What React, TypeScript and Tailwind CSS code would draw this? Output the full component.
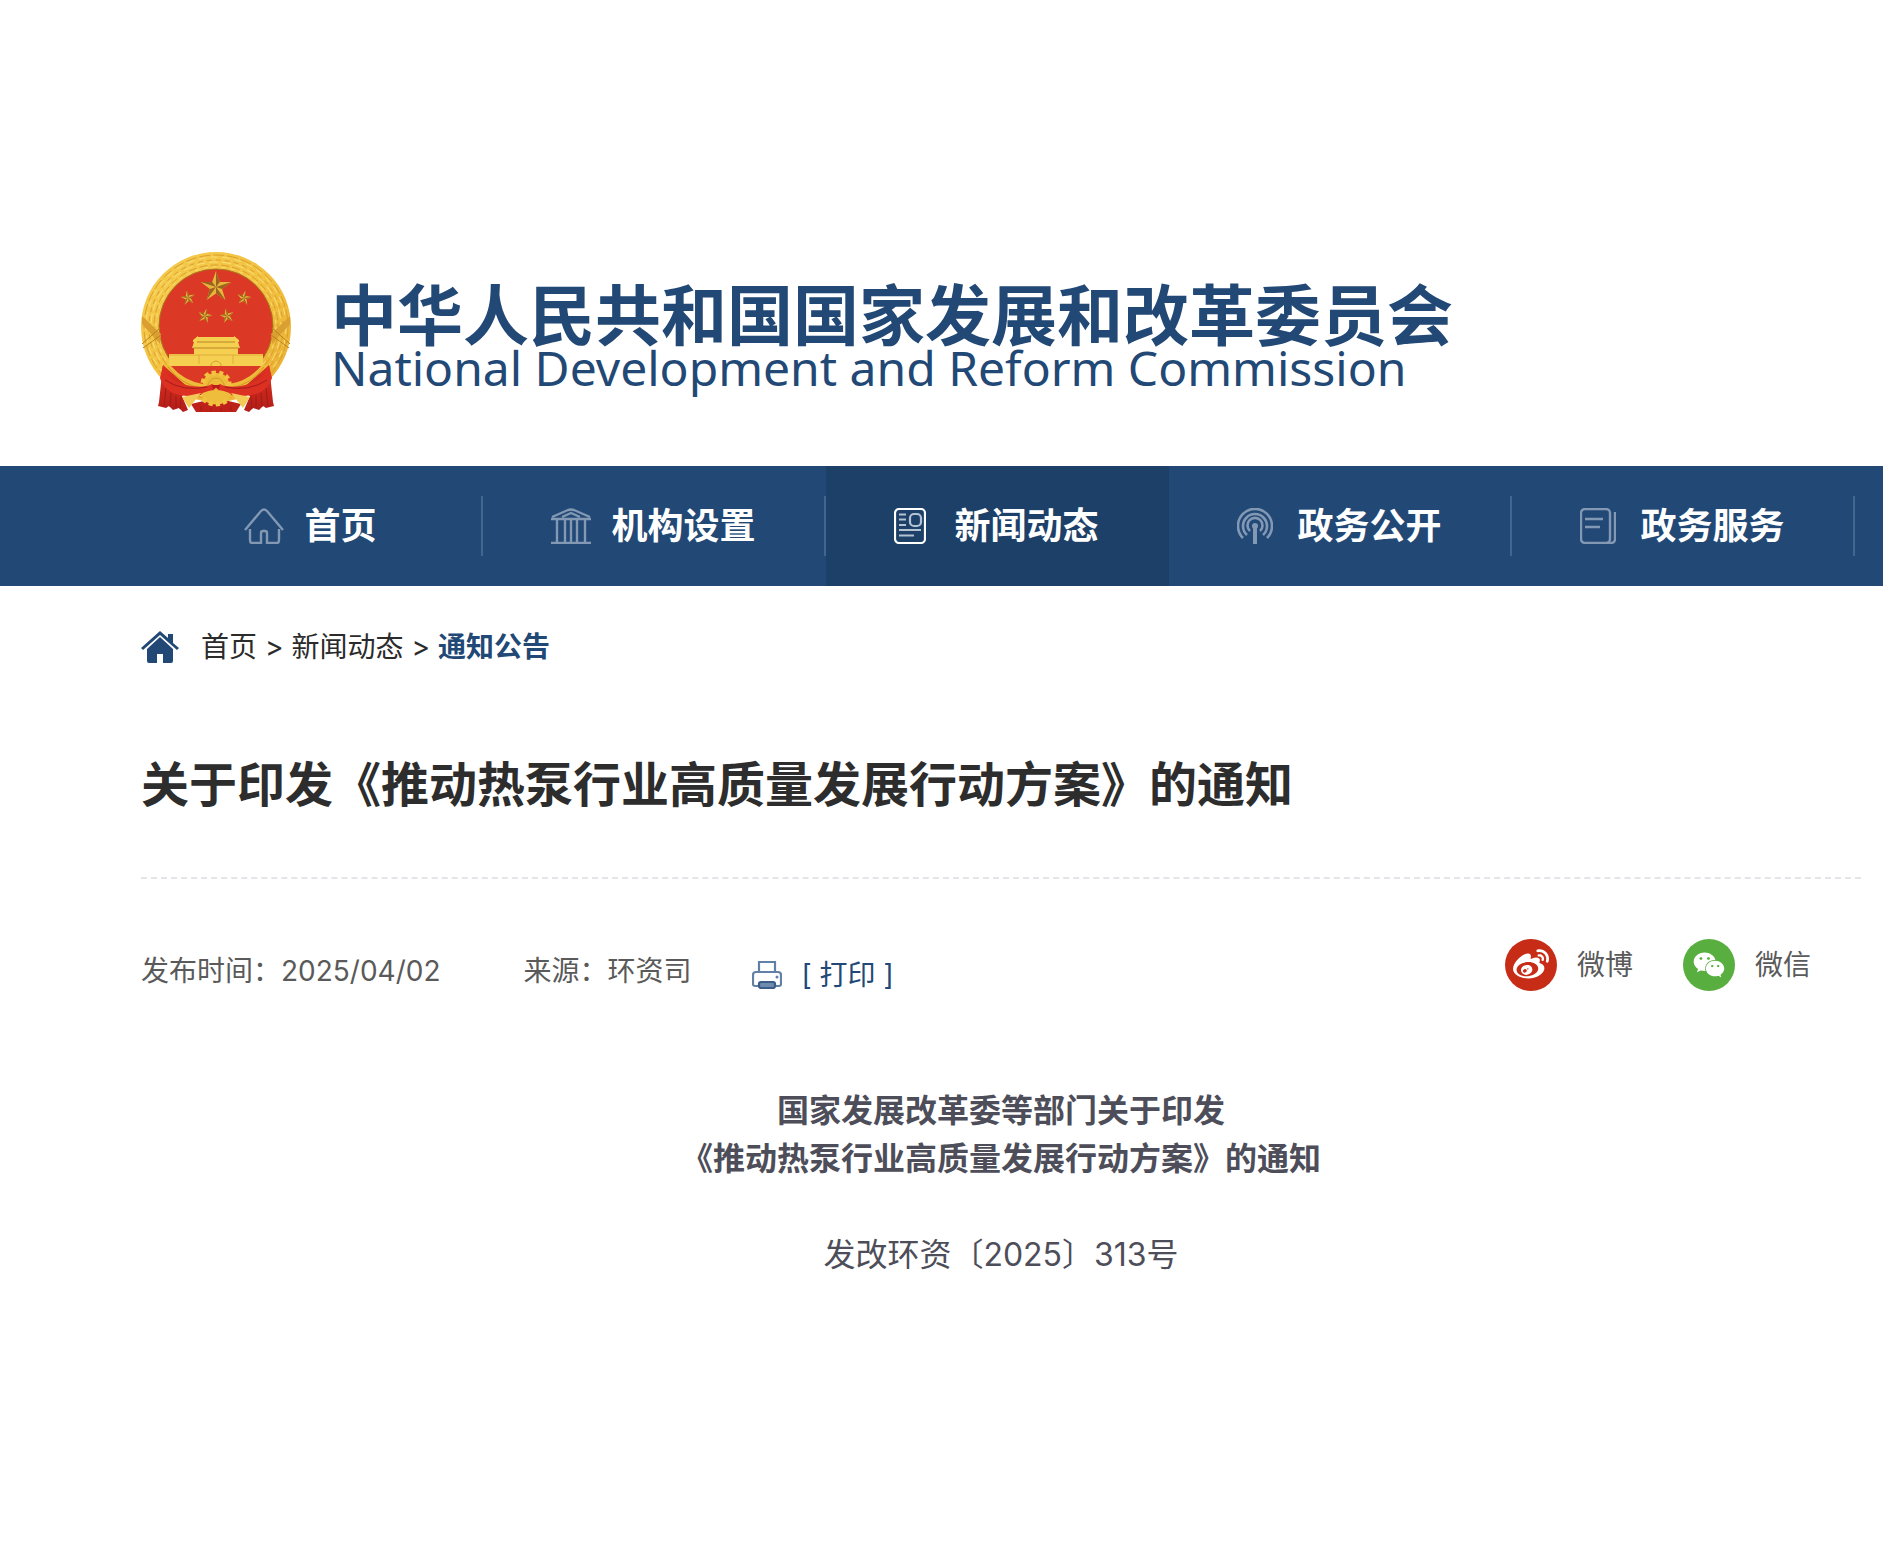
import type { ReactNode } from "react";
import { FaWeibo, FaWeixin } from "react-icons/fa";

function HomeIcon() {
    return (
        <svg className="w-10 h-9" viewBox="0 0 40 36" fill="none" stroke="currentColor" strokeWidth="2.4" aria-hidden="true">
            <path d="M1 22 17 3Q20 0 23 3L39 22" />
            <path d="M6 21V32Q6 35 8 35H17V25Q17 23 19 23H21Q23 23 23 25V35H33Q35 35 35 32V21" />
        </svg>
    );
}

function BankIcon() {
    return (
        <svg className="w-10 h-9" viewBox="0 0 40 36" fill="none" stroke="currentColor" strokeWidth="2.4" aria-hidden="true">
            <path d="M1 9 17 2Q20 1 23 2L39 9M0 11H40M0 35H40M11 9 20 5 29 9" />
            <path d="M6 12V34M14 12V34M20 12V34M26 12V34M34 12V34" />
        </svg>
    );
}

function NewsIcon() {
    return (
        <svg className="w-8 h-9" viewBox="0 0 32 36" fill="none" stroke="currentColor" strokeWidth="2.2" aria-hidden="true">
            <rect x="1" y="1" width="30" height="34" rx="4" stroke="#fff" />
            <rect x="16" y="6" width="11" height="12" rx="4" />
            <path d="M5 6.5H12M5 11.5H12M5 17H12M5 22H27M5 27.5H20" />
        </svg>
    );
}

function SignalIcon() {
    return (
        <svg className="w-9 h-9" viewBox="0 0 36 36" fill="none" stroke="currentColor" strokeWidth="2.6" aria-hidden="true">
            <path d="M6 30A17 17 0 1 1 30 30" />
            <path d="M10 27A12 12 0 1 1 26 27" />
            <path d="M13 23A7.5 7.5 0 1 1 23 23" />
            <circle cx="18" cy="18" r="3" fill="currentColor" stroke="none" />
            <path d="M18 18V36" strokeWidth="4" />
        </svg>
    );
}

function ServiceIcon() {
    return (
        <svg className="w-9 h-9" viewBox="0 0 36 36" fill="none" stroke="currentColor" strokeWidth="2.4" aria-hidden="true">
            <rect x="1" y="1" width="29" height="34" rx="4" />
            <path d="M5 11H23M5 19H20M35 4V31Q35 35 31 35H27" />
        </svg>
    );
}

function PrinterIcon() {
    return (
        <svg className="w-[30px] h-7" viewBox="0 0 30 28" fill="none" stroke="#6280a5" strokeWidth="2.2" aria-hidden="true">
            <path d="M7 11V1H23V11" />
            <path d="M6 25H3Q1 25 1 23V14Q1 11 4 11H26Q29 11 29 14V23Q29 25 27 25H24" />
            <rect x="7" y="21" width="16" height="6" rx="2" fill="#6f8bad" stroke="#3a5d89" />
            <circle cx="25" cy="16" r="1.5" fill="#6280a5" stroke="none" />
        </svg>
    );
}

function HouseIcon() {
    return (
        <svg className="w-[38px] h-8" viewBox="0 0 38 32" fill="#224876" aria-hidden="true">
            <path d="M0 17 19 0 27 7V3H32V12L38 17 36 19 19 4 2 19Z" />
            <path d="M6 18 19 6 32 18V30Q32 32 30 32H22V23H16V32H8Q6 32 6 30Z" />
        </svg>
    );
}

const stars = [
    { x: 75, y: 35, size: 1.6, turn: 0 },
    { x: 47, y: 46, size: 0.74, turn: -10 },
    { x: 103, y: 46, size: 0.74, turn: 10 },
    { x: 64, y: 64, size: 0.74, turn: 12 },
    { x: 86, y: 64, size: 0.74, turn: -12 },
];

function Emblem() {
    return (
        <svg className="w-[150px] h-40 shrink-0" viewBox="0 0 150 160" role="img" aria-label="国徽">
            <defs>
                <linearGradient id="gold" x1="0" y1="0" x2="1" y2="1">
                    <stop offset="0" stopColor="#f5cc4e" />
                    <stop offset="0.5" stopColor="#f2c240" />
                    <stop offset="1" stopColor="#e9ad32" />
                </linearGradient>
                <linearGradient id="drape" x1="0" y1="0" x2="0" y2="1">
                    <stop offset="0" stopColor="#df3322" />
                    <stop offset="1" stopColor="#b31d18" />
                </linearGradient>
            </defs>
            <circle cx="75" cy="75" r="75" fill="url(#gold)" />
            <g fill="none" stroke="#dc9f2e">
                <circle cx="75" cy="75" r="72" strokeDasharray="11 3" />
                <circle cx="75" cy="75" r="70" stroke="#fbdf78" strokeDasharray="7 5" />
                <circle cx="75" cy="75" r="67" strokeDasharray="5 4" />
                <circle cx="75" cy="75" r="65" stroke="#fbdf78" strokeDasharray="9 4" />
                <circle cx="75" cy="75" r="62" strokeDasharray="8 3" />
                <circle cx="75" cy="75" r="60" stroke="#fbdf78" strokeDasharray="4 5" />
            </g>
            <circle cx="75" cy="74" r="57" fill="#db3826" stroke="#a8761f" />
            <path d="M1 64 20 82 19 92 1 72ZM149 64 130 82 131 92 149 72Z" fill="#d99f31" />
            <path d="M1 92 19 76M149 92 131 76M2 96 20 83M148 96 130 83" stroke="#b9801f" />
            {stars.map((star) => (
                <g
                    key={`${star.x}-${star.y}`}
                    transform={`translate(${star.x} ${star.y}) rotate(${star.turn}) scale(${star.size})`}
                >
                    <path fill="#e9b43c" d="M0-10 2.4-3.2 9.5-3.1 3.8 1.2 5.9 8.1 0 4-5.9 8.1-3.8 1.2-9.5-3.1-2.4-3.2Z" />
                    <path
                        fill="#99641f"
                        d="M0 0 0-10 2.4-3.2ZM0 0 9.5-3.1 3.8 1.2ZM0 0 5.9 8.1 0 4ZM0 0-5.9 8.1-3.8 1.2ZM0 0-9.5-3.1-2.4-3.2Z"
                    />
                </g>
            ))}
            <g fill="#f5cf50">
                <path d="M28 102H53V96H97V102H122V114H28Z" />
                <path d="M53 90H97L99 96H51ZM52 88 57 84V85H93V84L98 88V90H52Z" />
            </g>
            <path d="M52 96H98M56 90H94" stroke="#bd8527" />
            <path d="M28 103H122M58 103V112M92 103V112" stroke="#e0ae3a" />
            <path d="M70 114V112Q75 106 80 112V114" fill="none" stroke="#d6a035" />
            <path d="M28 114H122Q110 138 75 142Q40 138 28 114Z" fill="#db3826" />
            <path d="M22 112 30 114Q43 129 62 132V141Q36 141 21 124ZM128 112 120 114Q107 129 88 132V141Q114 141 129 124Z" fill="#eebb38" />
            <path d="M27 115Q40 133 61 136M123 115Q110 133 89 136" fill="none" stroke="#d4952b" />
            <path d="M62 138Q60 121 75 121Q90 121 88 138Z" fill="#eebb38" />
            <path d="M62 138Q60 121 75 121Q90 121 88 138" fill="none" stroke="#f2c341" strokeWidth="5" strokeDasharray="4 3" />
            <path d="M66 136Q68 126 75 126Q82 126 84 136" fill="none" stroke="#cf9a31" />
            <path d="M22 113 18 150 17 154 25 156 28 154 32 158 38 156 42 160 47 158 41 144 50 138ZM128 113 132 150 133 154 125 156 122 154 118 158 112 156 108 160 103 158 109 144 100 138Z" fill="url(#drape)" />
            <path d="M22 113Q27 130 50 134 64 136 71 132L75 134 79 132Q86 136 100 134 123 130 128 113L131 126Q126 144 100 144 84 144 75 136 66 144 50 144 24 144 19 126Z" fill="#dc3023" />
            <path d="M50 152 75 146 100 152 95 160 55 160Z" fill="#bd211a" />
            <path d="M41 145 60 141 48 156ZM109 145 90 141 102 156Z" fill="#f3ca58" />
            <path d="M60 142Q75 134 90 142L87 149Q75 156 63 149Z" fill="#efbd3c" />
            <path d="M62 147Q75 157 88 147" fill="none" stroke="#f2c341" strokeWidth="5" strokeDasharray="4 3" />
            <path d="M71 133H79L78 138 75 135 72 138Z" fill="#b91f1a" />
            <path
                d="M25 136 23 154M30 141 29 155M35 144 35 156M40 145 39 157M125 136 127 154M120 141 121 155M115 144 115 156M110 145 111 157M24 128Q42 140 66 135M126 128Q108 140 84 135M60 154V159M70 156V160M80 156V160M90 154V159"
                fill="none"
                stroke="#a01b17"
            />
        </svg>
    );
}

type MenuItem = {
    label: string;
    icon: ReactNode;
    active?: boolean;
};

const menu: MenuItem[] = [
    { label: "首页", icon: <HomeIcon /> },
    { label: "机构设置", icon: <BankIcon /> },
    { label: "新闻动态", icon: <NewsIcon />, active: true },
    { label: "政务公开", icon: <SignalIcon /> },
    { label: "政务服务", icon: <ServiceIcon /> },
];

function Header() {
    return (
        <header className="pt-[252px]">
            <a href="#home" className="flex items-start gap-10 pl-[141px] pb-[54px] text-[#224876]">
                <Emblem />
                <div className="pt-8 whitespace-nowrap">
                    <p className="text-[66px] leading-[64px] font-bold">中华人民共和国国家发展和改革委员会</p>
                    <p className="text-[48px] leading-10 font-['Noto_Sans']">National Development and Reform Commission</p>
                </div>
            </a>
            <nav className="bg-[#224876] overflow-hidden">
                <ul className="flex pl-[140px]">
                    {menu.map((item) => (
                        <li
                            key={item.label}
                            className={`flex items-center w-[343px] h-[120px] shrink-0 ${item.active ? "bg-[#1d4068]" : ""}`}
                        >
                            <a
                                href="#menu"
                                className={`flex items-center justify-center gap-5 w-full h-[60px] border-r-2 text-4xl font-bold text-white ${
                                    item.active ? "border-transparent" : "border-[#416690]"
                                }`}
                            >
                                <span className={`w-10 ${item.active ? "text-[#b4c2d2]" : "text-[#8298b3]"}`}>
                                    {item.icon}
                                </span>
                                {item.label}
                            </a>
                        </li>
                    ))}
                </ul>
            </nav>
        </header>
    );
}

function Breadcrumb() {
    return (
        <nav className="flex items-center gap-[22px] text-[28px] leading-10 text-[#2b2b2b]">
            <HouseIcon />
            <ol className="flex items-center gap-2">
                <li>
                    <a href="#home">首页</a>
                </li>
                <li aria-hidden="true">&gt;</li>
                <li>
                    <a href="#news">新闻动态</a>
                </li>
                <li aria-hidden="true">&gt;</li>
                <li>
                    <a href="#notices" className="font-bold text-[#224876]">
                        通知公告
                    </a>
                </li>
            </ol>
        </nav>
    );
}

function ArticleInfo() {
    return (
        <div className="flex items-start justify-between pt-[60px] pr-[50px] text-[28px] leading-10 text-[#5a5a5a]">
            <div className="flex items-start pt-3">
                <span className="mr-[83px]">发布时间：2025/04/02</span>
                <span className="mr-[60px]">来源：环资司</span>
                <button type="button" className="flex items-center gap-5 pt-1 text-[#224876]">
                    <PrinterIcon />
                    [ 打印 ]
                </button>
            </div>
            <div className="flex items-center gap-[50px]">
                <a href="#weibo" className="flex items-center gap-5">
                    <span className="flex items-center justify-center size-[52px] rounded-full bg-[#c72d16] text-white">
                        <FaWeibo className="size-9" />
                    </span>
                    微博
                </a>
                <a href="#weixin" className="flex items-center gap-5">
                    <span className="flex items-center justify-center size-[52px] rounded-full bg-[#58ae3e] text-white">
                        <FaWeixin className="size-8" />
                    </span>
                    微信
                </a>
            </div>
        </div>
    );
}

export default function App() {
    return (
        <div className="min-h-screen bg-white font-['Inter','Noto_Sans_CJK_SC',sans-serif]">
            <Header />
            <main className="pt-[41px] pl-[141px] pr-[22px]">
                <Breadcrumb />
                <h1 className="pt-[84px] pb-[58px] text-5xl leading-[68px] font-bold text-[#2d2d2d] border-b-2 border-dashed border-[#e4e5e9]">
                    关于印发《推动热泵行业高质量发展行动方案》的通知
                </h1>
                <ArticleInfo />
                <article className="pt-[92px] text-[32px] leading-[48px] text-center text-[#4d4e59]">
                    <h2 className="font-bold">
                        国家发展改革委等部门关于印发
                        <br />
                        《推动热泵行业高质量发展行动方案》的通知
                    </h2>
                    <p className="pt-12">发改环资〔2025〕313号</p>
                </article>
            </main>
        </div>
    );
}
